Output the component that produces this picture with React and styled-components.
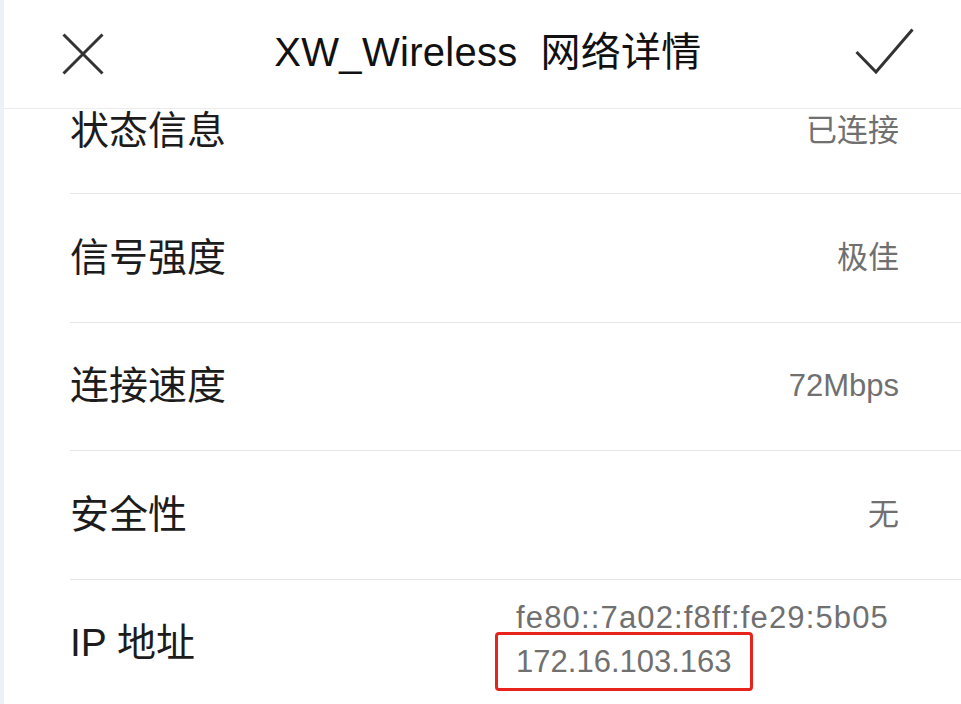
import React from "react";
import styled, { createGlobalStyle } from "styled-components";

const Global = createGlobalStyle`
  html, body { margin: 0; padding: 0; background: #ffffff; }
  body {
    font-family: "Liberation Sans", "Noto Sans CJK SC", sans-serif;
    -webkit-font-smoothing: antialiased;
  }
`;

const Page = styled.div`
  display: flex;
  width: 961px;
  height: 704px;
  overflow: hidden;
  background: #ffffff;
`;

const Strip = styled.div`
  width: 4px;
  flex: none;
  background: #edf0f7;
`;

const Main = styled.div`
  flex: 1;
  display: flex;
  flex-direction: column;
  min-width: 0;
`;

const Header = styled.header`
  height: 108px;
  flex: none;
  display: grid;
  grid-template-columns: 1fr auto 1fr;
  align-items: center;
  padding: 0 47px 0 58px;
  border-bottom: 1px solid #ebebeb;
`;

const IconButton = styled.button`
  all: unset;
  display: flex;
  align-items: center;
  justify-self: ${(p) => (p.$end ? "end" : "start")};
  margin-top: ${(p) => p.$shift || 0}px;
  color: #333333;
`;

const Title = styled.h1`
  margin: 0 0 4px 0;
  font-weight: 400;
  font-size: 40px;
  line-height: 48px;
  color: #111111;
  white-space: pre;
  letter-spacing: 0.3px;
`;

const List = styled.div`
  display: flex;
  flex-direction: column;
`;

const Row = styled.div`
  height: ${(p) => (p.$clipped ? "84px" : "127.5px")};
  margin-left: 66px;
  padding-right: 62px;
  display: flex;
  justify-content: space-between;
  align-items: ${(p) => (p.$clipped ? "flex-start" : "center")};
  border-bottom: 1px solid #e6e6e6;
  flex: none;
`;

const Label = styled.span`
  font-size: 39px;
  line-height: 44px;
  color: #1c1c1c;
`;

const Value = styled.span`
  font-size: 31px;
  line-height: 44px;
  color: #707070;
`;

const ValueStack = styled.div`
  display: flex;
  flex-direction: column;
  align-items: flex-start;
  margin-right: 10px;
  font-size: 31px;
  color: #707070;
`;

const Line = styled.span`
  line-height: 44px;
  letter-spacing: ${(p) => p.$spacing || 0}px;
`;

const Marked = styled.span`
  display: inline-block;
  line-height: 53px;
  margin-top: -8px;
  margin-left: -21px;
  padding: 0 18px;
  border: 3px solid #e8231b;
  border-radius: 4px;
`;

const CloseIcon = () => (
  <svg width="42" height="42" viewBox="0 0 42 42" fill="none">
    <path d="M1.5 1.5L40.5 40.5M40.5 1.5L1.5 40.5" stroke="currentColor" strokeWidth="3" />
  </svg>
);

const CheckIcon = () => (
  <svg width="59" height="47" viewBox="0 0 59 47" fill="none">
    <path d="M1.5 24L21 44L57.5 1.5" stroke="currentColor" strokeWidth="3" />
  </svg>
);

const rows = [
  { label: "信号强度", value: "极佳" },
  { label: "连接速度", value: "72Mbps" },
  { label: "安全性", value: "无" },
];

export default function App() {
  return (
    <>
      <Global />
      <Page>
        <Strip />
        <Main>
          <Header>
            <IconButton aria-label="关闭" $shift={0}>
              <CloseIcon />
            </IconButton>
            <Title>{"XW_Wireless  网络详情"}</Title>
            <IconButton $end aria-label="确定" $shift={-6}>
              <CheckIcon />
            </IconButton>
          </Header>
          <List>
            <Row $clipped>
              <Label>状态信息</Label>
              <Value>已连接</Value>
            </Row>
            {rows.map((r) => (
              <Row key={r.label}>
                <Label>{r.label}</Label>
                <Value>{r.value}</Value>
              </Row>
            ))}
            <Row>
              <Label>IP 地址</Label>
              <ValueStack>
                <Line $spacing={1.15}>fe80::7a02:f8ff:fe29:5b05</Line>
                <Marked>172.16.103.163</Marked>
              </ValueStack>
            </Row>
          </List>
        </Main>
      </Page>
    </>
  );
}
